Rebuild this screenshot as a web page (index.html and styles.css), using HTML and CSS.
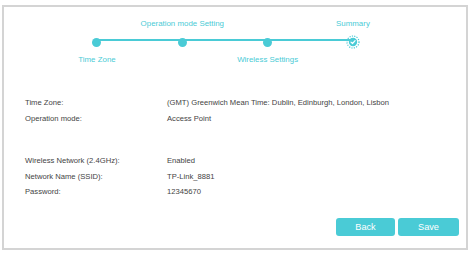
FILE: index.html
```html
<!DOCTYPE html>
<html>
<head>
<meta charset="utf-8">
<link rel="stylesheet" href="styles.css">
</head>
<body>
<div class="panel">
  <div class="stepper">
    <div class="line"></div>
    <div class="step">
      <div class="lbl-top"></div>
      <div class="dot-row"><span class="dot"></span></div>
      <div class="lbl-bot">Time Zone</div>
    </div>
    <div class="step">
      <div class="lbl-top">Operation mode Setting</div>
      <div class="dot-row"><span class="dot"></span></div>
      <div class="lbl-bot"></div>
    </div>
    <div class="step">
      <div class="lbl-top"></div>
      <div class="dot-row"><span class="dot"></span></div>
      <div class="lbl-bot">Wireless Settings</div>
    </div>
    <div class="step">
      <div class="lbl-top">Summary</div>
      <div class="dot-row">
        <svg class="done" width="14" height="14" viewBox="0 0 14 14">
          <circle cx="7" cy="7" r="6" fill="#fff" stroke="#4acbd6" stroke-width="1.2" stroke-dasharray="1.2 1.2"/>
          <circle cx="7" cy="7" r="4.2" fill="#4acbd6"/>
          <path d="M5 7.1 L6.5 8.5 L9.1 5.7" fill="none" stroke="#fff" stroke-width="1.2" stroke-linecap="round" stroke-linejoin="round"/>
        </svg>
      </div>
      <div class="lbl-bot"></div>
    </div>
  </div>

  <div class="group first">
    <div class="row"><span class="key">Time Zone:</span><span class="val">(GMT) Greenwich Mean Time: Dublin, Edinburgh, London, Lisbon</span></div>
    <div class="row"><span class="key">Operation mode:</span><span class="val">Access Point</span></div>
  </div>
  <div class="group second">
    <div class="row"><span class="key">Wireless Network (2.4GHz):</span><span class="val">Enabled</span></div>
    <div class="row"><span class="key">Network Name (SSID):</span><span class="val">TP-Link_8881</span></div>
    <div class="row"><span class="key">Password:</span><span class="val">12345670</span></div>
  </div>

  <div class="actions">
    <button class="btn back">Back</button>
    <button class="btn save">Save</button>
  </div>
</div>
</body>
</html>
```

FILE: styles.css
```css
html, body {
  margin: 0;
  padding: 0;
  background: #fff;
}
body {
  font-family: "Liberation Sans", Arial, sans-serif;
  color: #4a4a4a;
}
.panel {
  margin: 5px 0 0 2px;
  width: 462px;
  height: 241px;
  border: 2px solid #d4d4d4;
  display: flex;
  flex-direction: column;
}
.stepper {
  position: relative;
  display: grid;
  grid-template-columns: repeat(4, 85.33px);
  margin: 12px 0 0 50.3px;
}
.line {
  position: absolute;
  left: 42.67px;
  width: 256px;
  top: 20px;
  height: 2px;
  background: #4acbd6;
}
.step {
  display: grid;
  grid-template-rows: 10px 22px 10px;
  row-gap: 2px;
  justify-items: center;
  font-size: 7.9px;
  color: #4acbd6;
  white-space: nowrap;
}
.lbl-top, .lbl-bot {
  line-height: 10px;
}
.dot-row {
  display: flex;
  align-items: center;
  justify-content: center;
}
.dot {
  width: 9px;
  height: 9px;
  border-radius: 50%;
  background: #4acbd6;
}
.done { display: block; }
.group {
  display: flex;
  flex-direction: column;
  font-size: 7.65px;
  color: #444;
}
.group.first { margin-top: 30px; }
.group.second { margin-top: 27px; }
.row {
  display: flex;
  line-height: 15.5px;
  height: 15.5px;
}
.key {
  width: 142px;
  padding-left: 21px;
}
.actions {
  display: flex;
  justify-content: flex-end;
  gap: 3px;
  margin-top: auto;
  margin-bottom: 12px;
  padding-right: 7px;
}
.btn {
  height: 18px;
  border: none;
  border-radius: 3px;
  background: #4acbd6;
  color: #fff;
  font-family: "Liberation Sans", Arial, sans-serif;
  font-size: 9.2px;
  padding: 0;
}
.back { width: 59px; }
.save { width: 61px; }
```
